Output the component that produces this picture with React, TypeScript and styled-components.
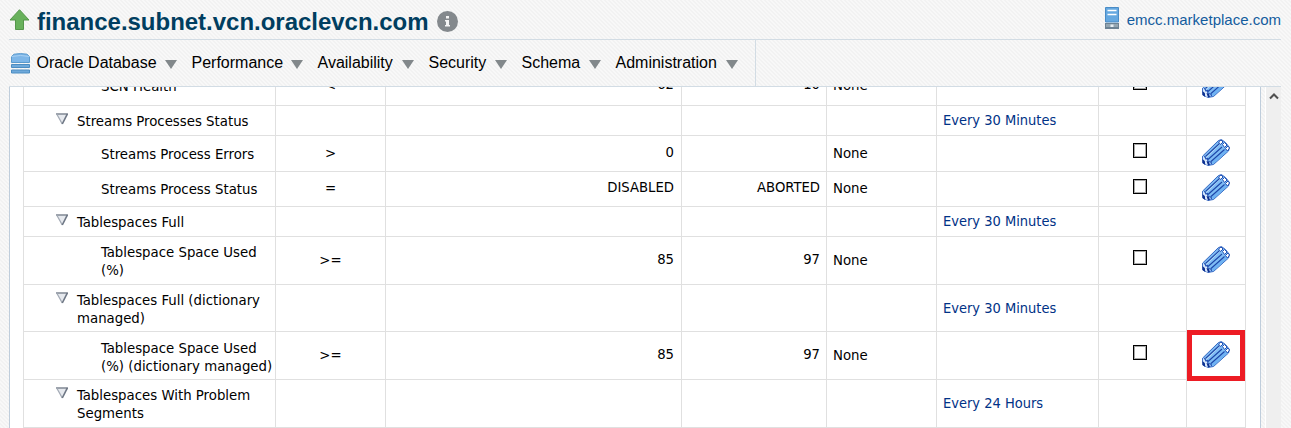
import React from "react";
import styled, { createGlobalStyle } from "styled-components";

const Global = createGlobalStyle`
  * { box-sizing: border-box; }
  body { margin: 0; background: #f5f5f5; overflow: hidden; }
`;

const tableFont = `"DejaVu Sans Condensed", "DejaVu Sans", sans-serif`;
const uiFont = `"Liberation Sans", Arial, sans-serif`;

const Page = styled.div`
  width: 1291px;
  height: 428px;
  overflow: hidden;
  padding: 0 10px 0 9px;
  display: flex;
  flex-direction: column;
  font-family: ${uiFont};
  background: repeating-linear-gradient(45deg, #f2f2f2 0 1.414px, #f8f8f8 1.414px 2.828px);
`;

const Header = styled.header`
  height: 40px;
  flex: none;
  display: flex;
  align-items: flex-start;
  border-bottom: 1px solid #d2dce4;
`;

const UpArrow = styled.svg`
  margin-top: 9px;
  flex: none;
`;

const Title = styled.h1`
  margin: 8px 8px 0 7px;
  width: 392px;
  font-size: 24px;
  letter-spacing: -0.02px;
  line-height: 28px;
  font-weight: bold;
  color: #003e60;
  white-space: nowrap;
`;

const InfoIcon = styled.svg`
  margin-top: 11px;
`;

const HostLink = styled.a`
  margin-left: auto;
  display: flex;
  gap: 8px;
  padding-top: 7px;
  font-size: 15px;
  line-height: 26px;
  color: #145c9e;
  white-space: nowrap;
`;

const MenuBar = styled.nav`
  width: 747px;
  height: 46px;
  flex: none;
  display: flex;
  align-items: center;
  border-right: 1px solid #d2dce4;
`;

const DatabaseIcon = styled.svg`
  margin: 1px 0 0 2px;
  flex: none;
`;

const MenuItem = styled.div<{ $w: number }>`
  width: ${(p) => p.$w}px;
  display: flex;
  justify-content: space-between;
  align-items: center;
  margin-left: 15px;
  font-size: 16px;
  line-height: 20px;
  color: #000;
  white-space: nowrap;

  &:first-of-type { margin-left: 6.5px; }
`;

const Caret = styled.span`
  margin-top: 3px;
  border: 6px solid transparent;
  border-top: 9px solid #82888b;
  border-bottom: 0;
`;

const Body = styled.main`
  flex: 1;
  min-height: 0;
  display: flex;
  border-top: 1px solid #d2dce4;
`;

const Panel = styled.section`
  width: 1252px;
  flex: none;
  background: #fff;
  border-left: 1px solid #bfcddb;
  border-right: 1px solid #bfcddb;
  padding-left: 13px;
  overflow: hidden;
`;

const ScrollTrack = styled.div`
  margin-left: 4px;
  width: 16px;
  flex: none;
  background: #efefef;
  border-left: 1px solid #fff;
  display: flex;
  justify-content: center;
  padding-top: 5px;
`;

const Table = styled.div`
  width: 1223px;
  margin-top: -21px;
  border-left: 1px solid #e0e0e0;
  font-family: ${tableFont};
  font-size: 14.8px;
  line-height: 18px;
  color: #000;
`;

const Row = styled.div<{ $h: number }>`
  height: ${(p) => p.$h}px;
  display: grid;
  grid-template-columns: 252px 110px 296px 145px 110px 162px 88px 59px;
  border-bottom: 1px solid #e0e0e0;
`;

const Cell = styled.div<{ $align?: string; $shift?: number }>`
  border-right: 1px solid #e0e0e0;
  display: flex;
  align-items: center;
  justify-content: ${(p) => p.$align ?? "flex-start"};
  padding: 0 6px;
  padding-bottom: ${(p) => p.$shift ?? 0}px;
  white-space: nowrap;
`;

const NameCell = styled(Cell)<{ $group?: boolean; $drop?: number }>`
  padding-left: ${(p) => (p.$group ? 32 : 77)}px;
  padding-right: 0;
  padding-top: ${(p) => (p.$group ? 1 : p.$drop ?? 0)}px;
  padding-bottom: 0;
  white-space: pre;
`;

const Disclosure = styled.svg`
  align-self: flex-start;
  margin: 6px 9px 0 0;
  flex: none;
`;

const Schedule = styled.a`
  font-size: 14.5px;
  color: #003286;
`;

const Check = styled.span`
  width: 14px;
  height: 15px;
  margin-right: 6px;
  border: 1px solid #000;
  box-shadow: inset 0 0 0 1px #a8a8a8;
`;

const ValueCell = styled(Cell)<{ $inset?: number }>`
  padding-right: ${(p) => p.$inset ?? 6}px;
  font-size: 14.7px;
`;

const EditCell = styled(Cell)`
  position: relative;
  padding-left: 5px;
`;

const Highlight = styled.div`
  position: absolute;
  left: 0;
  top: -2px;
  width: 58px;
  height: 51px;
  border: 5px solid #ed1c24;
`;

const Pencil = () => (
  <svg width="28" height="27" viewBox="0 0 28 27">
    <path d="M.700 17 16.500 1.500 19.500.600 23.500 3.500 27.500 8.500 26.500 12 11.500 25.500 6 26.400 1.500 24.500.500 19Z" fill="#7fbcf4" stroke="#3566c0" />
    <path d="M9 22 23.500 9.500 26 12 11.500 25Z" fill="#6fb2f2" />
    <path d="M3 17.500 17 4.500 18 5.500 4.500 19Z" fill="#b9dffc" />
    <path d="M1 17 4.500 20 9 24.500 6 26.300 1.500 24.500Z" fill="#dcebfd" />
    <path d="m3.500 17.500 14-13M6 20.500l14-12.500M9 22.500l13.500-12" fill="none" stroke="#1d46a8" strokeWidth="1.100" />
    <path d="m2.500 17 1.500 3 1.500-.5.500 3 3 .5.500 2" fill="none" stroke="#2452b4" strokeWidth="1.200" />
    <path d="M.300 20v4l3 2-.5-4zM4.500 22l1.500 4.500 2-.5-1-3z" fill="#0b2f90" />
    <path d="m16.500 3 2.500-2 2 2-2.500 2.500zM20.500 5.500l2-2L25 6l-2.500 2.500zM23.500 9.500 26 7l1.500 2-2 3z" fill="#fff" stroke="#2452b4" strokeWidth="1" />
  </svg>
);

type Item = {
  h: number;
  name: string;
  group?: boolean;
  drop?: number;
  op?: string;
  warn?: string;
  crit?: string;
  action?: string;
  every?: string;
  everyShift?: number;
  marked?: boolean;
};

const items: Item[] = [
  { h: 40, name: "SCN Health", drop: 1, op: "<", warn: "62", crit: "10", action: "None" },
  { h: 30, name: "Streams Processes Status", group: true, every: "Every 30 Minutes", everyShift: 2 },
  { h: 36, name: "Streams Process Errors", op: ">", warn: "0", action: "None" },
  { h: 35, name: "Streams Process Status", op: "=", warn: "DISABLED", crit: "ABORTED", action: "None" },
  { h: 30, name: "Tablespaces Full", group: true, every: "Every 30 Minutes", everyShift: 2 },
  { h: 48, name: "Tablespace Space Used\n(%)", drop: 1, op: ">=", warn: "85", crit: "97", action: "None" },
  { h: 47, name: "Tablespaces Full (dictionary\nmanaged)", group: true, every: "Every 30 Minutes" },
  { h: 48, name: "Tablespace Space Used\n(%) (dictionary managed)", drop: 2, op: ">=", warn: "85", crit: "97", action: "None", marked: true },
  { h: 48, name: "Tablespaces With Problem\nSegments", group: true, every: "Every 24 Hours", everyShift: 2 },
];

const menus: [string, number][] = [
  ["Oracle Database", 140],
  ["Performance", 111],
  ["Availability", 96],
  ["Security", 78],
  ["Schema", 79],
  ["Administration", 122],
];

export default function App() {
  return (
    <Page>
      <Global />
      <Header>
        <UpArrow width="21" height="22" viewBox="0 0 21 22">
          <path d="M10.500.700 20 11H14.500V20.500H6.500V11H1Z" fill="#68b15c" stroke="#55964b" />
        </UpArrow>
        <Title>finance.subnet.vcn.oraclevcn.com</Title>
        <InfoIcon width="21" height="21" viewBox="0 0 21 21">
          <circle cx="10.500" cy="10.500" r="10.500" fill="#84898d" />
          <path d="M9 5h3v2.500H9zM8 9h4v5h1v1.500H8V14h1V10.500H8Z" fill="#f5f5f5" />
        </InfoIcon>
        <HostLink>
          <svg width="14" height="22" viewBox="0 0 14 22">
            <path d="M.5.500h13v14.500H.5z" fill="#65a8e0" stroke="#4a8cc6" />
            <path d="M2.500 3.500h9M2.500 7.500h9" stroke="#fff" strokeWidth="1.300" />
            <path d="M0 16h14v6H0z" fill="#6c8293" />
            <path d="M1 17h12v3H1z" fill="#93a5b1" />
            <path d="M5.500 17.500h3v2.500h-3z" fill="#e5edf2" />
          </svg>
          emcc.marketplace.com
        </HostLink>
      </Header>
      <MenuBar>
        <DatabaseIcon width="19" height="21" viewBox="0 0 19 21">
          <path d="M.5 3.500 3 1.200Q9.500 0 16 1.200L18.500 3.500V9.500H.5Z" fill="#7db6e8" stroke="#5a9acd" />
          <path d="M.5 3.500Q9.500 1.500 18.500 3.500" fill="none" stroke="#a8d0f2" />
          <path d="M.5 11.500h18v3H.5zM.5 17h18v3H.5z" fill="#6fa9da" stroke="#4c8dc2" />
        </DatabaseIcon>
        {menus.map(([label, w]) => (
          <MenuItem key={label} $w={w}>
            {label}
            <Caret />
          </MenuItem>
        ))}
      </MenuBar>
      <Body>
        <Panel>
          <Table>
            {items.map((r, i) => (
              <Row key={i} $h={r.h}>
                <NameCell $group={r.group} $drop={r.drop}>
                  {r.group && (
                    <Disclosure width="12" height="12" viewBox="0 0 12 12">
                      <path d="M.7.700H11.300L6.500 11Z" fill="#e6e9ee" />
                      <path d="M0 1h12" stroke="#808895" strokeWidth="1.500" />
                      <path d="M.7 1 6.300 11" stroke="#a2a9b4" strokeWidth="1.300" />
                      <path d="M11.300 1 6.300 11" stroke="#6d7684" strokeWidth="1.600" />
                    </Disclosure>
                  )}
                  {r.name}
                </NameCell>
                <Cell $align="center" $shift={2}>{r.op}</Cell>
                <ValueCell $align="flex-end" $shift={4} $inset={7}>{r.warn}</ValueCell>
                <ValueCell $align="flex-end" $shift={4}>{r.crit}</ValueCell>
                <Cell $shift={2}>{r.action}</Cell>
                <Cell $shift={r.everyShift}><Schedule>{r.every}</Schedule></Cell>
                <Cell $align="center" $shift={6}>{!r.group && <Check />}</Cell>
                <EditCell $align="center" $shift={3}>
                  {!r.group && <Pencil />}
                  {r.marked && <Highlight />}
                </EditCell>
              </Row>
            ))}
          </Table>
        </Panel>
        <ScrollTrack>
          <svg width="10" height="8" viewBox="0 0 10 8">
            <path d="m1 6.500 4-4 4 4" fill="none" stroke="#505050" strokeWidth="2" />
          </svg>
        </ScrollTrack>
      </Body>
    </Page>
  );
}
